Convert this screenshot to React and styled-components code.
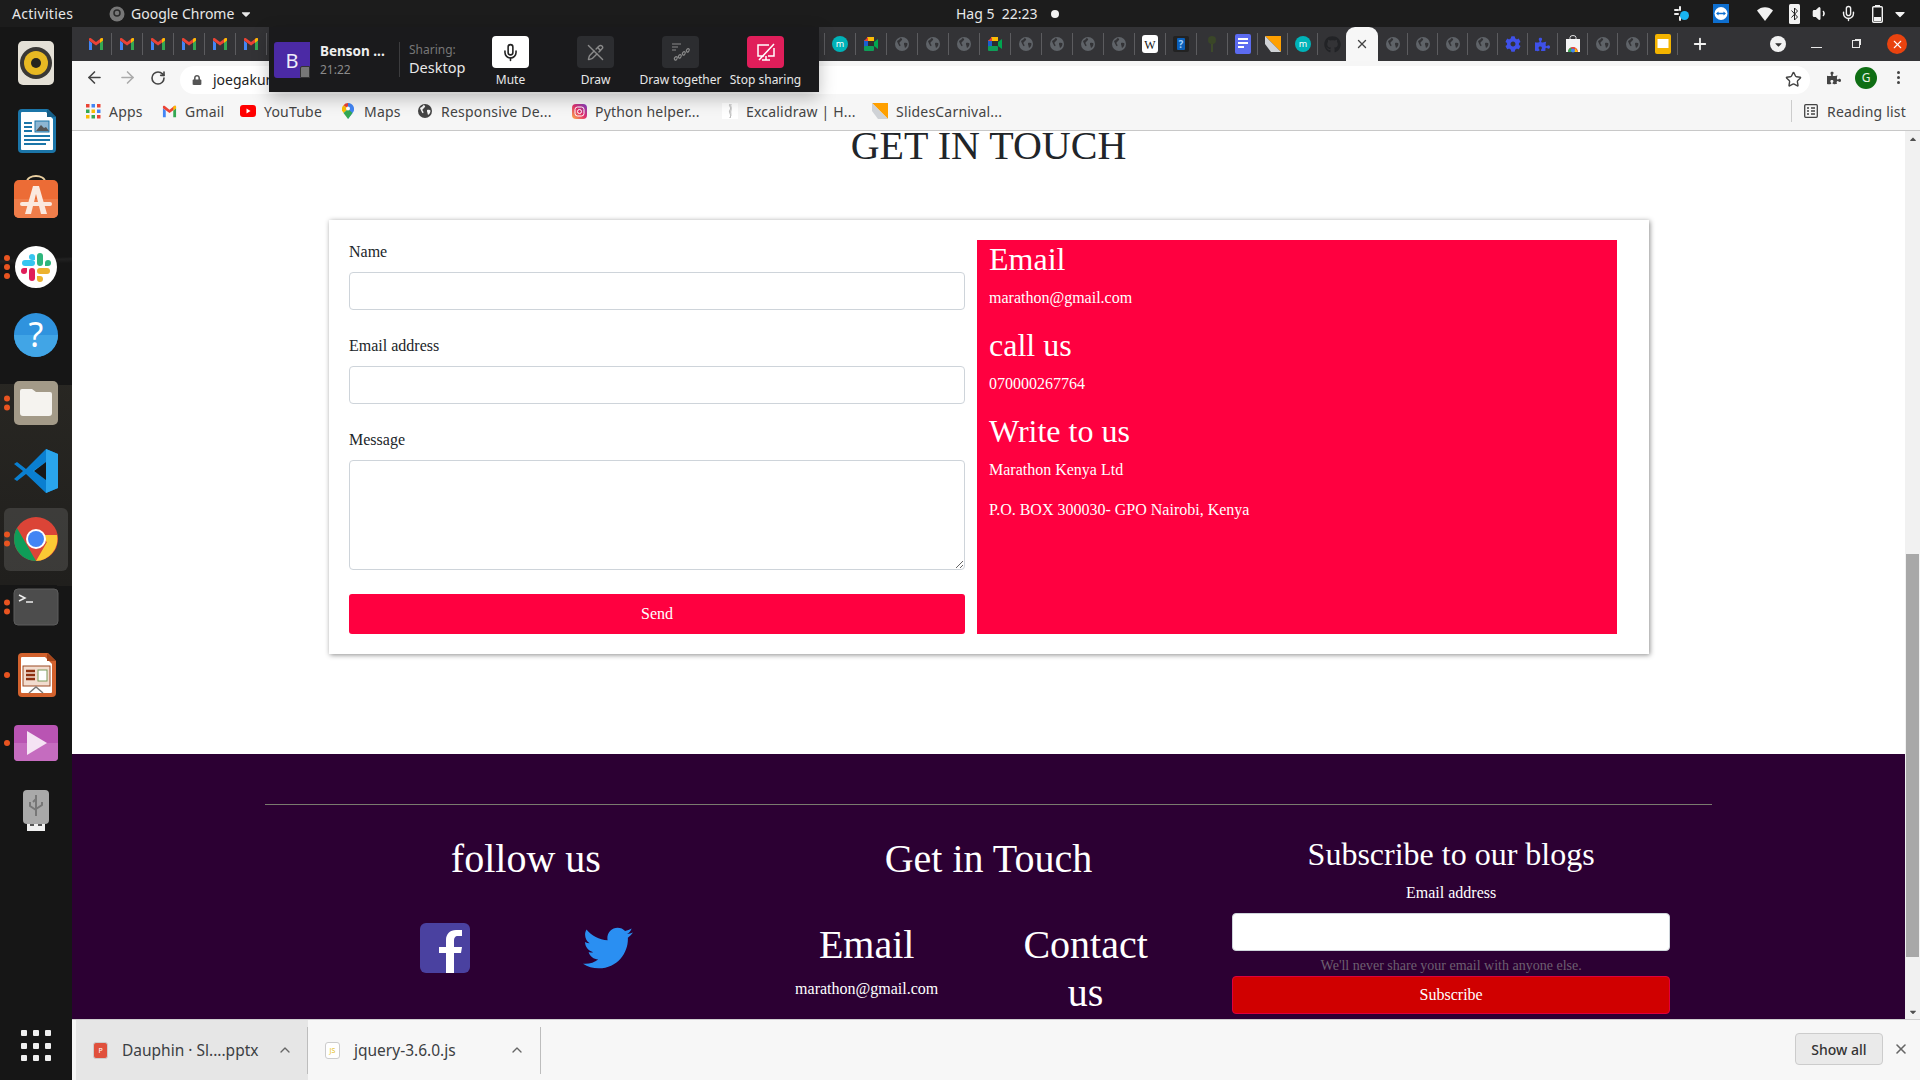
import React from "react";
import styled, { createGlobalStyle } from "styled-components";
import { ArrowLeft, ArrowRight, RotateCw, Star, Mic, PencilOff, Plus, X, ChevronUp, Volume1 } from "lucide-react";
import { FaTwitter, FaGithub, FaCog, FaPuzzlePiece, FaLock, FaCaretDown, FaCaretUp } from "react-icons/fa";

const Global = createGlobalStyle`
  html, body { margin: 0; padding: 0; background: #171717; }
  * { box-sizing: border-box; }
`;

const GmailIcon = ({ size = 16 }) => (
  <svg width={size} height={size} viewBox="0 0 16 16">
    <path d="M1 4.5V14h3V7z" fill="#4285f4" />
    <path d="M12 7v7h3V4.5z" fill="#34a853" />
    <path d="M1 4.5V3c0-1 1-1.400 2-.8L8 6l1 2-1 1.500L1 4.500z" fill="#ea4335" />
    <path d="M8 6l5-3.800c1-.6 2-.2 2 .8v1.500L8 9.500z" fill="#ea4335" />
    <path d="M12 3l1-.8c1-.6 2-.2 2 .8v1.500L12 7z" fill="#fbbc04" />
  </svg>
);

const MeetIcon = () => (
  <svg width="16" height="16" viewBox="0 0 16 16">
    <rect x="1" y="4" width="4" height="8" fill="#1a5fd0" />
    <rect x="4" y="1" width="7" height="4" fill="#fbbc04" />
    <rect x="1" y="10" width="10" height="5" rx="1" fill="#0f9d58" />
    <path d="M1 5l4-4v4z" fill="#ea4335" />
    <path d="M11 6l4-3v10l-4-3z" fill="#00a650" />
    <rect x="5" y="5" width="6" height="5" fill="#2d2d2d" />
  </svg>
);

const GlobeIcon = ({ color = "#5f6368", dark = "#333336" }) => (
  <svg width="16" height="16" viewBox="0 0 16 16">
    <circle cx="8" cy="8" r="7" fill={color} />
    <path d="M3 5c2-1 3-2 3.500-3 2 .5 2 1.500 1 2.500-1 .5-1 1.500-2 2-.5 1 1 1.500 1 3 0 1-1 1-1.500 0C4.500 8 3.500 7 3 5zM10 7c1.500-.5 3-.5 3.500.5 0 2-1 3.500-2.500 4.500-.5-1.500-.5-2.500-1-3.500z" fill={dark} />
  </svg>
);

const MintIcon = () => (
  <svg width="16" height="16" viewBox="0 0 16 16">
    <circle cx="8" cy="8" r="8" fill="#00b3b8" />
    <text x="8" y="11" textAnchor="middle" fontSize="9" fill="#fff" fontFamily="Noto Sans, sans-serif">m</text>
  </svg>
);

const WikiIcon = () => (
  <svg width="16" height="18" viewBox="0 0 16 18">
    <rect width="16" height="18" rx="3" fill="#fff" />
    <text x="8" y="13.500" textAnchor="middle" fontSize="12" fill="#111" fontFamily="Liberation Serif, serif">W</text>
  </svg>
);

const HelpTabIcon = () => (
  <svg width="16" height="16" viewBox="0 0 16 16">
    <rect width="16" height="16" rx="2" fill="#222" />
    <rect x="4" y="2" width="8" height="12" rx="1" fill="#0b5fb8" />
    <text x="8" y="12" textAnchor="middle" fontSize="10" fontWeight="700" fill="#9fd0ff" fontFamily="Noto Sans, sans-serif">?</text>
  </svg>
);

const TreeIcon = () => (
  <svg width="16" height="18" viewBox="0 0 16 18">
    <path d="M7 17h2V9l3-2-3 1V6L7 8 4 6l3 3z" fill="#3d4a2a" />
    <circle cx="8" cy="5" r="4" fill="#3a4628" />
  </svg>
);

const DocsIcon = () => (
  <svg width="16" height="20" viewBox="0 0 16 20">
    <rect width="16" height="20" rx="2" fill="#5c6bf0" />
    <path d="M3 5h10M3 9h10M3 13h6" stroke="#fff" strokeWidth="2" />
  </svg>
);

const OrangeSlideIcon = ({ size = 16 }) => (
  <svg width={size} height={size} viewBox="0 0 16 16">
    <path d="M0 0h16v16z" fill="#ffa000" />
    <path d="M0 0l16 16H6L0 8z" fill="#cfd2d6" />
  </svg>
);

const StoreIcon = () => (
  <svg width="16" height="18" viewBox="0 0 16 18">
    <path d="M5 4V2.500a3 2 0 0 1 6 0V4" fill="none" stroke="#ddd" />
    <rect x="1" y="4" width="14" height="13" fill="#f5f5f5" />
    <path d="M3 17a5 5 0 0 1 10 0z" fill="#e53935" />
    <path d="M8 17l2.500-4 2.500 4z" fill="#fbbc04" />
    <path d="M3 17a5 5 0 0 1 3-4.500L8 17z" fill="#34a853" />
    <circle cx="8" cy="15.500" r="2" fill="#4285f4" />
  </svg>
);

const YellowSlidesIcon = () => (
  <svg width="16" height="20" viewBox="0 0 16 20">
    <rect width="16" height="20" rx="2" fill="#f4b400" />
    <rect x="2.500" y="5" width="11" height="9" fill="#fff" />
  </svg>
);

const FAVICONS = {
  gmail: <GmailIcon />,
  meet: <MeetIcon />,
  globe: <GlobeIcon />,
  mint: <MintIcon />,
  wiki: <WikiIcon />,
  help: <HelpTabIcon />,
  tree: <TreeIcon />,
  docs: <DocsIcon />,
  orange: <OrangeSlideIcon />,
  github: <FaGithub size={17} color="#222326" />,
  gear: <FaCog size={16} color="#3f51e8" />,
  puzzle: <FaPuzzlePiece size={15} color="#3f51e8" />,
  store: <StoreIcon />,
  slides: <YellowSlidesIcon />,
};

const leftTabs = [
  ...Array(6).fill("gmail"),
  ...Array(18).fill("globe"),
  "mint", "meet", "globe", "globe", "globe", "meet", "globe", "globe", "globe", "globe",
  "wiki", "help", "tree", "docs", "orange", "mint", "github",
];
const rightTabs = ["globe", "globe", "globe", "globe", "gear", "puzzle", "store", "globe", "globe", "slides"];

const bookmarks = [
  { label: "Apps", width: 76, icon: <AppsGrid /> },
  { label: "Gmail", width: 79, icon: <GmailIcon size={15} /> },
  { label: "YouTube", width: 100, icon: <YoutubeIcon /> },
  { label: "Maps", width: 77, icon: <MapsIcon /> },
  { label: "Responsive De...", width: 154, icon: <GlobeIcon color="#444" dark="#f6f6f6" /> },
  { label: "Python helper...", width: 151, icon: <InstaIcon /> },
  { label: "Excalidraw | H...", width: 150, icon: <ExcalIcon /> },
  { label: "SlidesCarnival...", width: 160, icon: <OrangeSlideIcon /> },
];

function AppsGrid() {
  const colors = ["#ea4335", "#4285f4", "#ea4335", "#34a853", "#fbbc04", "#4285f4", "#fbbc04", "#34a853", "#ea4335"];
  return (
    <svg width="15" height="15" viewBox="0 0 15 15">
      {colors.map((c, i) => (
        <rect key={i} x={(i % 3) * 5.5} y={Math.floor(i / 3) * 5.500} width="3.500" height="3.500" fill={c} />
      ))}
    </svg>
  );
}

function YoutubeIcon() {
  return (
    <svg width="16" height="12" viewBox="0 0 16 12">
      <rect width="16" height="12" rx="3" fill="#f00" />
      <path d="M6.500 3.500v5l4-2.500z" fill="#fff" />
    </svg>
  );
}

function MapsIcon() {
  return (
    <svg width="12" height="16" viewBox="0 0 12 16">
      <path d="M6 0a6 6 0 0 1 4.500 10L6 16z" fill="#4285f4" />
      <path d="M6 0a6 6 0 0 0-4.500 2.200L6 6z" fill="#ea4335" />
      <path d="M1.500 2.200A6 6 0 0 0 1.500 10L6 6z" fill="#fbbc04" />
      <path d="M1.500 10L6 16l4.500-6L6 6z" fill="#34a853" />
      <circle cx="6" cy="5.500" r="2" fill="#fff" />
    </svg>
  );
}

function InstaIcon() {
  return (
    <svg width="15" height="15" viewBox="0 0 15 15">
      <defs>
        <linearGradient id="insta" x1="0" y1="1" x2="1" y2="0">
          <stop offset="0" stopColor="#fdb34a" />
          <stop offset=".5" stopColor="#e1306c" />
          <stop offset="1" stopColor="#7b3fc4" />
        </linearGradient>
      </defs>
      <rect width="15" height="15" rx="4" fill="url(#insta)" />
      <rect x="3" y="3" width="9" height="9" rx="2.500" fill="none" stroke="#fff" />
      <circle cx="7.500" cy="7.500" r="2" fill="none" stroke="#fff" />
    </svg>
  );
}

function ExcalIcon() {
  return (
    <svg width="16" height="16" viewBox="0 0 16 16">
      <rect width="16" height="16" fill="#fff" />
      <path d="M8 1c-2 2 2 3 0 6s2 4 0 8M9 1c-1 3 1 3 0 6s1 4-1 8" fill="none" stroke="#bbb" />
    </svg>
  );
}

// top bar tray
const WifiIcon = () => (
  <svg width="16" height="14" viewBox="0 0 16 14"><path d="M0 3.500C4-1 12-1 16 3.500L8 14z" fill="#f2f2f2" /></svg>
);
const BluetoothIcon = () => (
  <svg width="11" height="20" viewBox="0 0 11 20">
    <rect width="11" height="20" rx="1.500" fill="#f2f2f2" />
    <path d="M2.500 6.500l6 6.500-3 3V4l3 3-6 6.500" fill="none" stroke="#222" />
  </svg>
);
const BatteryIcon = () => (
  <svg width="11" height="18" viewBox="0 0 11 18">
    <rect x="3" width="5" height="2" fill="#f2f2f2" />
    <rect x=".7" y="1.700" width="9.600" height="15.600" rx="1" fill="none" stroke="#f2f2f2" strokeWidth="1.400" />
    <rect x="2" y="12" width="7" height="4" fill="#f2f2f2" />
  </svg>
);
const TeamViewerIcon = () => (
  <svg width="16" height="19" viewBox="0 0 16 19">
    <rect width="16" height="19" fill="#0e6fd0" />
    <circle cx="8" cy="9.500" r="6.500" fill="#fff" />
    <path d="M3 9.500l2.500-2v1.300h5V7.500l2.500 2-2.500 2v-1.300h-5v1.300z" fill="#0e6fd0" />
  </svg>
);
const SlackTray = () => (
  <svg width="15" height="15" viewBox="0 0 15 15">
    <rect x="0" y="3" width="5" height="2" rx="1" fill="#eee" />
    <rect x="5" y="0" width="2" height="5" rx="1" fill="#eee" />
    <rect x="0" y="7" width="5" height="2" rx="1" fill="#eee" />
    <rect x="5" y="10" width="2" height="5" rx="1" fill="#eee" />
    <circle cx="10.500" cy="9.500" r="4.500" fill="#18b4f0" />
  </svg>
);

const DockSvg = ({ children }) => <svg width="48" height="48" viewBox="0 0 48 48">{children}</svg>;

const RhythmIcon = () => (
  <DockSvg>
    <rect x="6" y="2" width="36" height="44" rx="5" fill="#e4e0d6" />
    <circle cx="24" cy="24" r="16" fill="#3a3835" />
    <circle cx="24" cy="24" r="12" fill="#e8b923" />
    <circle cx="24" cy="24" r="5" fill="#26241f" />
  </DockSvg>
);

const WriterIcon = () => (
  <DockSvg>
    <path d="M10 2h26l8 8v32a4 4 0 0 1-4 4H10a4 4 0 0 1-4-4V6a4 4 0 0 1 4-4z" fill="#1b75a8" />
    <path d="M10 5h24l7 7v30a1 1 0 0 1-1 1H10a1 1 0 0 1-1-1V6a1 1 0 0 1 1-1z" fill="#fff" />
    <path d="M35 2l9 8h-9z" fill="#155d86" />
    <path d="M12 16h8M12 20h8M12 24h8M12 29h26M12 33h26M12 37h22" stroke="#1b75a8" strokeWidth="2" />
    <rect x="23" y="14" width="14" height="11" fill="#8db6d3" stroke="#1b75a8" />
    <path d="M24 24l5-6 3 3 2-1 3 4z" fill="#555" />
  </DockSvg>
);

const SoftwareIcon = () => (
  <DockSvg>
    <path d="M15 7c0-8 18-8 18 0" fill="none" stroke="#e9cfa0" strokeWidth="2" />
    <rect x="2" y="5" width="44" height="38" rx="5" fill="#ec6c36" />
    <path d="M2 24h44v14a5 5 0 0 1-5 5H7a5 5 0 0 1-5-5z" fill="#ef7d4a" />
    <path d="M21 11h6l8 28h-6l-5-20-5 20h-6z" fill="#fbe9df" />
    <rect x="8" y="27" width="32" height="4" rx="2" fill="#fbe9df" />
  </DockSvg>
);

const SlackIcon = () => (
  <DockSvg>
    <circle cx="24" cy="24" r="21" fill="#fff" />
    <rect x="10" y="17" width="13" height="6" rx="3" fill="#36c5f0" />
    <path d="M23 17h-3a3 3 0 1 1 3-3z" fill="#36c5f0" />
    <rect x="25" y="10" width="6" height="13" rx="3" fill="#2eb67d" />
    <path d="M33 23v-3a3 3 0 1 1 3 3z" fill="#2eb67d" />
    <rect x="25" y="25" width="13" height="6" rx="3" fill="#ecb22e" />
    <path d="M25 33h3a3 3 0 1 1-3 3z" fill="#ecb22e" />
    <rect x="17" y="25" width="6" height="13" rx="3" fill="#e01e5a" />
    <path d="M15 25v3a3 3 0 1 1-3-3z" fill="#e01e5a" />
  </DockSvg>
);

const HelpIcon = () => (
  <DockSvg>
    <circle cx="24" cy="24" r="22" fill="#2f93de" />
    <path d="M2 24a22 22 0 0 0 44 0z" fill="#41a5e6" />
    <text x="24" y="36" textAnchor="middle" fontSize="34" fill="#fff" fontFamily="Noto Sans, sans-serif">?</text>
  </DockSvg>
);

const FilesIcon = () => (
  <DockSvg>
    <rect x="2" y="2" width="44" height="44" rx="5" fill="#a39a88" />
    <path d="M8 12a2 2 0 0 1 2-2h10l4 3h14a2 2 0 0 1 2 2v19a3 3 0 0 1-3 3H11a3 3 0 0 1-3-3z" fill="#f5f3ef" />
  </DockSvg>
);

const VscodeIcon = () => (
  <DockSvg>
    <path d="M34 2L14 22 5 15l-3 2 9 7-9 8 3 2 9-7 20 19 12-5V7z" fill="#0a7fd0" />
    <path d="M34 2l12 5v34l-12 5V31L21 24l13-9z" fill="#2aa5ec" />
    <path d="M34 15v18l-12-9z" fill="#171717" />
  </DockSvg>
);

const ChromeIcon = () => (
  <DockSvg>
    <circle cx="24" cy="24" r="22" fill="#db4437" />
    <path d="M24 46A22 22 0 0 1 5 13l11 19z" fill="#0f9d58" />
    <path d="M24 46l11-19-11-7h21A22 22 0 0 1 24 46z" fill="#fcc934" />
    <circle cx="24" cy="24" r="10" fill="#fff" />
    <circle cx="24" cy="24" r="8" fill="#4285f4" />
  </DockSvg>
);

const TerminalIcon = () => (
  <DockSvg>
    <rect x="2" y="6" width="44" height="36" rx="4" fill="#4c4c4c" stroke="#5c5c5c" />
    <path d="M7 12l6 3-6 3" fill="none" stroke="#eee" strokeWidth="1.500" />
    <path d="M14 19h7" stroke="#eee" strokeWidth="1.500" />
  </DockSvg>
);

const ImpressIcon = () => (
  <DockSvg>
    <path d="M10 2h26l8 8v32a4 4 0 0 1-4 4H10a4 4 0 0 1-4-4V6a4 4 0 0 1 4-4z" fill="#d2622e" />
    <path d="M10 6h23l7 7v28a1 1 0 0 1-1 1H10a1 1 0 0 1-1-1V7a1 1 0 0 1 1-1z" fill="#fff" />
    <path d="M35 2l9 8h-9z" fill="#a44419" />
    <rect x="11" y="15" width="27" height="20" fill="#f2dccf" stroke="#9c4a24" />
    <path d="M14 20h9M14 24h9M14 28h9" stroke="#8c2f0f" strokeWidth="2.500" />
    <rect x="26" y="19" width="9" height="11" fill="#fff" stroke="#7a9a5a" />
    <path d="M17 42l7-6 7 6" fill="none" stroke="#777" strokeWidth="1.500" />
  </DockSvg>
);

const VideoIcon = () => (
  <DockSvg>
    <rect x="2" y="6" width="44" height="36" rx="4" fill="#b954b3" />
    <path d="M2 24h44v14a4 4 0 0 1-4 4H6a4 4 0 0 1-4-4z" fill="#c56cbf" />
    <path d="M15 12l20 12-20 12z" fill="#f5e3f4" />
  </DockSvg>
);

const UsbIcon = () => (
  <DockSvg>
    <rect x="15" y="35" width="18" height="9" fill="#f0f0f0" />
    <path d="M18 38h4M26 38h4" stroke="#555" strokeWidth="2" />
    <rect x="11" y="3" width="26" height="34" rx="4" fill="#a9a9a9" />
    <path d="M24 8v21M24 12l-3 3M18 15v4l6 4M30 15v3l-6 4" fill="none" stroke="#777" strokeWidth="2" />
  </DockSvg>
);

const DrawTogetherIcon = () => (
  <svg width="22" height="22" viewBox="0 0 22 22" fill="none" stroke="#8a8a8a" strokeWidth="1.200">
    <path d="M2 3h9M2 6h6M2 9h4" />
    <path d="M5 19c-2-2 1-4 2-3s-1 4-2 3zM9 17c-2-2 1-4 2-3s-1 4-2 3zM13 14c-2-2 1-4 2-3s-1 4-2 3zM17 11c-2-2 1-4 2-3s-1 4-2 3z" />
  </svg>
);

const StopShareIcon = () => (
  <svg width="22" height="22" viewBox="0 0 22 22" fill="none" stroke="#fff" strokeWidth="1.500">
    <path d="M14 4H3v11h6M19 7v8h-6M7 19h8M11 15v4M19 3L4 19" />
  </svg>
);

const FacebookIcon = () => (
  <svg width="50" height="50" viewBox="0 0 50 50">
    <rect width="50" height="50" rx="6" fill="#4a41a0" />
    <path d="M34 50V30h7l1-6h-8v-6c0-3 1-5 4-5h4V7h-6c-6 0-10 4-10 10v7h-7v6h7v20z" fill="#fff" />
  </svg>
);

const Dots = ({ count }) => (
  <DotStack>
    {Array.from({ length: count }).map((_, i) => <Dot key={i} />)}
  </DotStack>
);

const dock = [
  { icon: <RhythmIcon /> },
  { icon: <WriterIcon /> },
  { icon: <SoftwareIcon /> },
  { icon: <SlackIcon />, dots: 3 },
  { icon: <HelpIcon /> },
  { icon: <FilesIcon />, dots: 2 },
  { icon: <VscodeIcon /> },
  { icon: <ChromeIcon />, dots: 2, active: true },
  { icon: <TerminalIcon />, dots: 2 },
  { icon: <ImpressIcon />, dots: 1 },
  { icon: <VideoIcon />, dots: 1 },
  { icon: <UsbIcon /> },
];

const App = () => {
  return (
    <Screen>
      <Global />
      <TopBar>
        <Activities>Activities</Activities>
        <AppMenu>
          <AppDot>
            <circle cx="8" cy="8" r="7.500" fill="#777" />
            <circle cx="8" cy="7" r="3" fill="none" stroke="#2a2a2a" strokeWidth="1.500" />
          </AppDot>
          Google Chrome
          <FaCaretDown size={14} />
        </AppMenu>
        <Clock>Hag 5&nbsp;&nbsp;22:23<ClockDot /></Clock>
        <Tray>
          <TrayIcon $gap={0}><SlackTray /></TrayIcon>
          <TrayIcon $gap={24}><TeamViewerIcon /></TrayIcon>
          <TrayIcon $gap={28}><WifiIcon /></TrayIcon>
          <TrayIcon $gap={16}><BluetoothIcon /></TrayIcon>
          <TrayIcon $gap={12}><Volume1 size={17} color="#f2f2f2" fill="#f2f2f2" /></TrayIcon>
          <TrayIcon $gap={11}><Mic size={17} color="#f2f2f2" /></TrayIcon>
          <TrayIcon $gap={15}><BatteryIcon /></TrayIcon>
          <TrayIcon $gap={9}><FaCaretDown size={16} color="#f2f2f2" /></TrayIcon>
        </Tray>
      </TopBar>

      <Desktop>
        <Dock>
          {dock.map((item, i) => (
            <DockItem key={i}>
              {item.dots && <Dots count={item.dots} />}
              <DockTile $active={item.active}>{item.icon}</DockTile>
            </DockItem>
          ))}
          <AppGrid>
            {Array.from({ length: 9 }).map((_, i) => <AppGridDot key={i} />)}
          </AppGrid>
        </Dock>

        <Browser>
          <TabStrip>
            {leftTabs.map((t, i) => <Tab key={i} $w={i < 37 ? 31 : 30}>{FAVICONS[t]}</Tab>)}
            <ActiveTab><X size={14} strokeWidth={2.400} /></ActiveTab>
            {rightTabs.map((t, i) => <Tab key={i} $w={30}>{FAVICONS[t]}</Tab>)}
            <NewTab><Plus size={18} strokeWidth={2.400} /></NewTab>
            <WindowCtl $ml={49}><TabSearch><FaCaretDown size={11} color="#333" /></TabSearch></WindowCtl>
            <WindowCtl $ml={25}><MinimizeBar /></WindowCtl>
            <WindowCtl $ml={30}><RestoreBox /></WindowCtl>
            <WindowCtl $ml={27}><CloseCircle><X size={13} strokeWidth={2} /></CloseCircle></WindowCtl>
          </TabStrip>

          <Toolbar>
            <NavButton $left={12}><ArrowLeft size={19} color="#444" /></NavButton>
            <NavButton $left={13}><ArrowRight size={19} color="#aaa" /></NavButton>
            <NavButton $left={11}><RotateCw size={16} color="#444" strokeWidth={2.400} /></NavButton>
            <Omnibox>
              <FaLock size={10} color="#555" />
              <UrlText>joegakur</UrlText>
              <Star size={17} color="#444" />
            </Omnibox>
            <ToolbarIcon $ml={17}><FaPuzzlePiece size={14} color="#444" /></ToolbarIcon>
            <Avatar>G</Avatar>
            <MenuDots><i /><i /><i /></MenuDots>
          </Toolbar>

          <BookmarksBar>
            {bookmarks.map((b) => (
              <Bookmark key={b.label} $w={b.width}>
                <BookmarkIcon>{b.icon}</BookmarkIcon>
                {b.label}
              </Bookmark>
            ))}
            <ReadingList>
              <svg width="14" height="14" viewBox="0 0 14 14" fill="none" stroke="#444" strokeWidth="1.300">
                <rect x=".7" y=".7" width="12.600" height="12.600" rx="1" />
                <path d="M3 4h2M7 4h4M3 7h2M7 7h4M3 10h2M7 10h4" />
              </svg>
              Reading list
            </ReadingList>
          </BookmarksBar>

          <PageRow>
            <Page>
              <PageTitle>GET IN TOUCH</PageTitle>
              <ContactCard>
                <ContactForm>
                  <Field>
                    <Label>Name</Label>
                    <Input type="text" />
                  </Field>
                  <Field>
                    <Label>Email address</Label>
                    <Input type="email" />
                  </Field>
                  <Field>
                    <Label>Message</Label>
                    <TextArea />
                  </Field>
                  <SendButton type="button">Send</SendButton>
                </ContactForm>
                <InfoPanel>
                  <InfoTitle>Email</InfoTitle>
                  <InfoText>marathon@gmail.com</InfoText>
                  <InfoTitle>call us</InfoTitle>
                  <InfoText>070000267764</InfoText>
                  <InfoTitle>Write to us</InfoTitle>
                  <InfoText>Marathon Kenya Ltd</InfoText>
                  <InfoText>P.O. BOX 300030- GPO Nairobi, Kenya</InfoText>
                </InfoPanel>
              </ContactCard>

              <Footer>
                <FooterRule />
                <FooterGrid>
                  <FooterColumn>
                    <FooterHeading>follow us</FooterHeading>
                    <SocialRow>
                      <FacebookIcon />
                      <FaTwitter size={50} color="#2a8ff2" />
                    </SocialRow>
                  </FooterColumn>
                  <FooterColumn>
                    <FooterHeading>Get in Touch</FooterHeading>
                    <TouchRow>
                      <TouchCell>
                        <TouchTitle>Email</TouchTitle>
                        <TouchText>marathon@gmail.com</TouchText>
                      </TouchCell>
                      <TouchCell>
                        <TouchTitle>Contact us</TouchTitle>
                      </TouchCell>
                    </TouchRow>
                  </FooterColumn>
                  <FooterColumn>
                    <SubscribeTitle>Subscribe to our blogs</SubscribeTitle>
                    <SubscribeLabel>Email address</SubscribeLabel>
                    <SubscribeInput type="email" />
                    <HelpText>We'll never share your email with anyone else.</HelpText>
                    <SubscribeButton type="button">Subscribe</SubscribeButton>
                  </FooterColumn>
                </FooterGrid>
              </Footer>
            </Page>
            <ScrollTrack>
              <ScrollArrow><FaCaretUp size={10} /></ScrollArrow>
              <ScrollThumb />
              <ScrollArrow $bottom><FaCaretDown size={10} /></ScrollArrow>
            </ScrollTrack>
          </PageRow>

          <DownloadBar>
            <DownloadItem $active $w={232}>
              <FileBadge $bg="#e0503c" $color="#fff">P</FileBadge>
              <DownloadName>Dauphin · Sl....pptx</DownloadName>
              <ChevronUp size={16} color="#666" />
            </DownloadItem>
            <DownloadItem $w={233}>
              <FileBadge $bg="#fff" $color="#e4c020">JS</FileBadge>
              <DownloadName>jquery-3.6.0.js</DownloadName>
              <ChevronUp size={16} color="#666" />
            </DownloadItem>
            <ShowAll type="button">Show all</ShowAll>
            <DownloadClose><X size={16} color="#666" strokeWidth={2.400} /></DownloadClose>
          </DownloadBar>
        </Browser>
      </Desktop>

      <SharePanel>
        <SharerAvatar>B<AvatarBadge /></SharerAvatar>
        <SharerInfo>
          <SharerName>Benson ...</SharerName>
          <SharerTime>21:22</SharerTime>
        </SharerInfo>
        <SharingInfo>
          <SharingLabel>Sharing:</SharingLabel>
          <SharingValue>Desktop</SharingValue>
        </SharingInfo>
        <ToolRow>
          <ToolButton>
            <ToolBox $bg="#fff"><Mic size={19} color="#222" /></ToolBox>
            Mute
          </ToolButton>
          <ToolButton>
            <ToolBox $bg="#2c2d30"><PencilOff size={17} color="#8a8a8a" /></ToolBox>
            Draw
          </ToolButton>
          <ToolButton>
            <ToolBox $bg="#2c2d30"><DrawTogetherIcon /></ToolBox>
            Draw together
          </ToolButton>
          <ToolButton>
            <ToolBox $bg="#e01e5a"><StopShareIcon /></ToolBox>
            Stop sharing
          </ToolButton>
        </ToolRow>
      </SharePanel>
    </Screen>
  );
};

export default App;

const sans = `"Noto Sans", "Open Sans", sans-serif`;
const serif = `"Liberation Serif", "Times New Roman", serif`;

const Screen = styled.div`
  position: relative;
  width: 1920px;
  height: 1080px;
  overflow: hidden;
  display: flex;
  flex-direction: column;
  font-family: ${sans};
  background: #171717;
`;

const TopBar = styled.div`
  height: 27px;
  flex: none;
  display: flex;
  align-items: center;
  background: #1c1c1c;
  color: #e8e8e8;
  font-size: 14px;
`;

const Activities = styled.div`
  margin-left: 12px;
  width: 97px;
  letter-spacing: 0.3px;
`;

const AppMenu = styled.div`
  display: flex;
  align-items: center;
  gap: 5px;
  width: 847px;
`;

const AppDot = styled.svg.attrs({ viewBox: "0 0 16 16", width: 16, height: 16 })`
  margin-right: 1px;
`;

const Clock = styled.div`
  display: flex;
  align-items: center;
  gap: 13px;
`;

const ClockDot = styled.span`
  width: 8px;
  height: 8px;
  border-radius: 50%;
  background: #f2f2f2;
`;

const Tray = styled.div`
  margin-left: auto;
  padding-right: 12px;
  display: flex;
  align-items: center;
`;

const TrayIcon = styled.div`
  display: flex;
  align-items: center;
  margin-left: ${(p) => p.$gap}px;
`;

const Desktop = styled.div`
  flex: 1;
  min-height: 0;
  display: flex;
`;

const Dock = styled.div`
  width: 72px;
  flex: none;
  display: flex;
  flex-direction: column;
  padding-top: 2px;
  background:
    linear-gradient(178deg, transparent 22%, rgba(255, 255, 255, 0.05) 22.2%, transparent 22.6%),
    linear-gradient(181deg, transparent 34%, rgba(150, 140, 110, 0.14) 34%, rgba(120, 110, 90, 0.1) 53%, transparent 53%),
    #161616;
`;

const DockItem = styled.div`
  position: relative;
  height: 68px;
  flex: none;
  display: flex;
  align-items: center;
  justify-content: center;
`;

const DockTile = styled.div`
  width: 64px;
  height: 63px;
  border-radius: 6px;
  display: flex;
  align-items: center;
  justify-content: center;
  background: ${(p) => (p.$active ? "rgba(255,255,255,0.12)" : "transparent")};
`;

const DotStack = styled.div`
  position: absolute;
  z-index: 1;
  left: 4px;
  top: 50%;
  transform: translateY(-50%);
  display: flex;
  flex-direction: column;
  gap: 3px;
`;

const Dot = styled.span`
  width: 6px;
  height: 6px;
  border-radius: 50%;
  background: #e95420;
`;

const AppGrid = styled.div`
  margin: auto 0 19px 21px;
  display: grid;
  grid-template-columns: repeat(3, 6px);
  gap: 6.500px 6px;
`;

const AppGridDot = styled.span`
  width: 6px;
  height: 6px;
  border-radius: 1px;
  background: #f0f0f0;
`;

const Browser = styled.div`
  flex: 1;
  min-width: 0;
  display: flex;
  flex-direction: column;
`;

const TabStrip = styled.div`
  height: 34px;
  flex: none;
  display: flex;
  align-items: center;
  padding-left: 9px;
  background: #333336;
`;

const Tab = styled.div`
  width: ${(p) => p.$w}px;
  height: 22px;
  flex: none;
  display: flex;
  align-items: center;
  justify-content: center;
  border-right: 1px solid #5c5c5f;
`;

const ActiveTab = styled.div`
  width: 32px;
  height: 34px;
  flex: none;
  margin-left: -2px;
  display: flex;
  align-items: center;
  justify-content: center;
  border-radius: 9px 9px 0 0;
  background: #f7f7f7;
  color: #444;
`;

const NewTab = styled.div`
  width: 43px;
  flex: none;
  display: flex;
  justify-content: center;
  color: #f2f2f2;
`;

const WindowCtl = styled.div`
  margin-left: ${(p) => p.$ml}px;
  display: flex;
  align-items: center;
`;

const TabSearch = styled.div`
  width: 16px;
  height: 16px;
  border-radius: 50%;
  background: #f2f2f2;
  display: flex;
  align-items: center;
  justify-content: center;
`;

const MinimizeBar = styled.div`
  width: 11px;
  height: 1px;
  margin-top: 6px;
  background: #e8e8e8;
`;

const RestoreBox = styled.div`
  width: 8px;
  height: 8px;
  border: 1px solid #e8e8e8;
  box-shadow: 2px -2px 0 -1px #e8e8e8;
`;

const CloseCircle = styled.div`
  width: 20px;
  height: 20px;
  border-radius: 50%;
  background: #e9430f;
  color: #fff;
  display: flex;
  align-items: center;
  justify-content: center;
`;

const Toolbar = styled.div`
  height: 33px;
  flex: none;
  display: flex;
  align-items: center;
  background: #f6f6f6;
`;

const NavButton = styled.div`
  margin-left: ${(p) => p.$left}px;
  display: flex;
  width: 20px;
  justify-content: center;
`;

const Omnibox = styled.div`
  height: 28px;
  width: 1630px;
  margin: 4px 0 0 12px;
  padding: 0 8px 0 12px;
  display: flex;
  align-items: center;
  border-radius: 14px;
  background: #fff;
`;

const UrlText = styled.span`
  flex: 1;
  margin-left: 11px;
  font-size: 14px;
  color: #222;
`;

const ToolbarIcon = styled.div`
  margin-left: ${(p) => p.$ml}px;
  display: flex;
`;

const Avatar = styled.div`
  width: 22px;
  height: 22px;
  margin-left: 14px;
  border-radius: 50%;
  background: #0f6e14;
  color: #e8f3e8;
  font-size: 12px;
  display: flex;
  align-items: center;
  justify-content: center;
`;

const MenuDots = styled.div`
  margin-left: 20px;
  display: flex;
  flex-direction: column;
  gap: 2px;

  i {
    width: 3px;
    height: 3px;
    border-radius: 50%;
    background: #444;
  }
`;

const BookmarksBar = styled.div`
  height: 37px;
  flex: none;
  display: flex;
  align-items: center;
  padding: 0 0 2px 13px;
  background: #f6f6f6;
  border-bottom: 1px solid #c8c8c8;
  color: #444;
  font-size: 14px;
  letter-spacing: 0.2px;
`;

const Bookmark = styled.div`
  width: ${(p) => p.$w}px;
  flex: none;
  display: flex;
  align-items: center;
  white-space: nowrap;
`;

const BookmarkIcon = styled.span`
  width: 16px;
  margin-right: 8px;
  display: flex;
  justify-content: center;
`;

const ReadingList = styled.div`
  margin-left: auto;
  margin-right: 14px;
  height: 22px;
  padding-left: 12px;
  display: flex;
  align-items: center;
  gap: 9px;
  border-left: 1px solid #ccc;
`;

const PageRow = styled.div`
  flex: 1;
  min-height: 0;
  display: flex;
`;

const Page = styled.div`
  flex: 1;
  min-width: 0;
  background: #fff;
  font-family: ${serif};
  color: #212529;
`;

const PageTitle = styled.h1`
  margin: 0.5px 0 60px;
  font-size: 40px;
  line-height: 28px;
  font-weight: 400;
  text-align: center;
`;

const ContactCard = styled.div`
  width: 1320px;
  margin: 0 0 100px 257px;
  padding: 20px 31px 20px 20px;
  display: grid;
  grid-template-columns: 616px 640px;
  gap: 12px;
  background: #fff;
  box-shadow: 1px 1px 5px rgba(0, 0, 0, 0.45);
`;

const ContactForm = styled.form`
  display: flex;
  flex-direction: column;
`;

const Field = styled.div`
  margin-bottom: 24px;
`;

const Label = styled.label`
  display: block;
  margin-bottom: 8px;
  font-size: 16px;
  line-height: 24px;
`;

const Input = styled.input`
  display: block;
  width: 100%;
  height: 38px;
  border: 1px solid #ced4da;
  border-radius: 4px;
  background: #fff;
`;

const TextArea = styled.textarea`
  display: block;
  width: 100%;
  height: 110px;
  border: 1px solid #ced4da;
  border-radius: 4px;
  background: #fff;
`;

const SendButton = styled.button`
  height: 40px;
  border: none;
  border-radius: 3px;
  background: #ff0040;
  color: #fff;
  font-family: ${serif};
  font-size: 16px;
`;

const InfoPanel = styled.div`
  padding: 0 12px;
  background: #ff0040;
  color: #fff;
`;

const InfoTitle = styled.h2`
  margin: 0 0 8px;
  font-size: 32px;
  line-height: 38.200px;
  font-weight: 400;
`;

const InfoText = styled.p`
  margin: 0 0 16px;
  font-size: 16px;
  line-height: 24px;
`;

const Footer = styled.div`
  height: 265px;
  padding-top: 50px;
  background: #2c0033;
  color: #fff;
`;

const FooterRule = styled.div`
  width: 1447px;
  height: 1px;
  margin: 0 auto;
  background: #7a7a6e;
`;

const FooterGrid = styled.div`
  width: 1388px;
  margin: 30px auto 0;
  display: grid;
  grid-template-columns: repeat(3, 1fr);
`;

const FooterColumn = styled.div`
  padding: 0 12px;
  text-align: center;
`;

const FooterHeading = styled.h2`
  margin: 0 0 38px;
  font-size: 40px;
  line-height: 48px;
  font-weight: 400;
`;

const SocialRow = styled.div`
  margin-left: 2px;
  padding-top: 2px;
  display: flex;
  justify-content: center;
  align-items: center;
  gap: 113px;
`;

const TouchRow = styled.div`
  display: grid;
  grid-template-columns: 219px 219px;
  margin-left: -12px;
`;

const TouchCell = styled.div`
  padding: 0 36px;
`;

const TouchTitle = styled.h3`
  margin: 0 0 8px;
  font-size: 40px;
  line-height: 48px;
  font-weight: 400;
`;

const TouchText = styled.p`
  margin: 0;
  font-size: 16px;
  line-height: 24px;
`;

const SubscribeTitle = styled.h2`
  margin: 0 0 8px;
  font-size: 32px;
  line-height: 38.400px;
  font-weight: 400;
`;

const SubscribeLabel = styled.label`
  display: block;
  margin-bottom: 8px;
  font-size: 16px;
  line-height: 24px;
`;

const SubscribeInput = styled.input`
  display: block;
  width: 100%;
  height: 38px;
  border: 1px solid #ced4da;
  border-radius: 4px;
  background: #fff;
`;

const HelpText = styled.div`
  margin-top: 4px;
  font-size: 14px;
  line-height: 21px;
  color: #6c5f70;
`;

const SubscribeButton = styled.button`
  display: block;
  width: 100%;
  height: 38px;
  border: 1px solid #e0003c;
  border-radius: 4px;
  background: #d00000;
  color: #fff;
  font-family: ${serif};
  font-size: 16px;
`;

const ScrollTrack = styled.div`
  width: 15px;
  flex: none;
  display: flex;
  flex-direction: column;
  align-items: center;
  background: #f1f1f1;
`;

const ScrollArrow = styled.div`
  height: 15px;
  display: flex;
  align-items: center;
  color: #505050;
  margin-top: ${(p) => (p.$bottom ? "auto" : "0")};
`;

const ScrollThumb = styled.div`
  width: 13px;
  height: 403px;
  margin-top: 408px;
  background: #a8a8a8;
`;

const DownloadBar = styled.div`
  height: 61px;
  flex: none;
  display: flex;
  align-items: center;
  padding-left: 4px;
  background: #f7f7f7;
  border-top: 1px solid #cfcfcf;
`;

const DownloadItem = styled.div`
  position: relative;
  width: ${(p) => p.$w}px;
  height: 60px;
  flex: none;
  display: flex;
  align-items: center;
  padding-left: 17px;
  background: ${(p) => (p.$active ? "#e6e6e6" : "transparent")};

  &::after {
    content: "";
    position: absolute;
    right: 0;
    top: 7px;
    bottom: 6px;
    width: 1px;
    background: #bdbdbd;
  }
`;

const FileBadge = styled.span`
  width: 15px;
  height: 17px;
  flex: none;
  border-radius: 3px;
  background: ${(p) => p.$bg};
  color: ${(p) => p.$color};
  border: 1px solid #ccc;
  font-size: 7px;
  display: flex;
  align-items: center;
  justify-content: center;
`;

const DownloadName = styled.span`
  width: 155px;
  margin-left: 14px;
  font-size: 15.500px;
  color: #3c4043;
  white-space: nowrap;
`;

const ShowAll = styled.button`
  width: 88px;
  height: 32px;
  margin: 0 0 2px auto;
  border: 1px solid #ccc;
  border-radius: 4px;
  background: #eaeaea;
  color: #333;
  font-family: ${sans};
  font-size: 14px;
  font-weight: 500;
`;

const DownloadClose = styled.div`
  margin: 0 11px 2px 10px;
  display: flex;
`;

const SharePanel = styled.div`
  position: absolute;
  left: 269px;
  top: 27px;
  width: 550px;
  height: 65px;
  padding: 15px 0 0 5px;
  display: flex;
  align-items: flex-start;
  background: #1a1a1c;
  box-shadow: 0 6px 16px rgba(0, 0, 0, 0.25);
  color: #eee;
`;

const SharerAvatar = styled.div`
  position: relative;
  width: 36px;
  height: 36px;
  flex: none;
  border-radius: 3px 0 3px 3px;
  background: #4b2aa5;
  color: #f0eefa;
  font-size: 20px;
  display: flex;
  align-items: center;
  justify-content: center;
`;

const AvatarBadge = styled.span`
  position: absolute;
  right: 0;
  bottom: 0;
  width: 10px;
  height: 12px;
  border-radius: 2px 0 0 0;
  background: #777;
  border: 1px solid #333;
`;

const SharerInfo = styled.div`
  width: 79px;
  margin-left: 10px;
`;

const SharerName = styled.div`
  margin-top: -1px;
  font-size: 13.500px;
  font-weight: 700;
  line-height: 20px;
  white-space: nowrap;
`;

const SharerTime = styled.div`
  font-size: 12px;
  line-height: 18px;
  color: #8a8a8a;
`;

const SharingInfo = styled.div`
  width: 59px;
  padding-left: 9px;
  height: 35px;
  border-left: 1px solid #3c3c3e;
  flex: none;
  box-sizing: content-box;
`;

const SharingLabel = styled.div`
  font-size: 12px;
  line-height: 16px;
  color: #777;
`;

const SharingValue = styled.div`
  font-size: 14.500px;
  line-height: 18px;
  white-space: nowrap;
  color: #e8e8e8;
`;

const ToolRow = styled.div`
  display: flex;
  margin-top: -6px;
`;

const ToolButton = styled.div`
  width: 85px;
  display: flex;
  flex-direction: column;
  align-items: center;
  gap: 4px;
  font-size: 12px;
  line-height: 16px;
  color: #e8e8e8;
  white-space: nowrap;
`;

const ToolBox = styled.div`
  width: 37px;
  height: 32px;
  border-radius: 4px;
  background: ${(p) => p.$bg};
  display: flex;
  align-items: center;
  justify-content: center;
`;
